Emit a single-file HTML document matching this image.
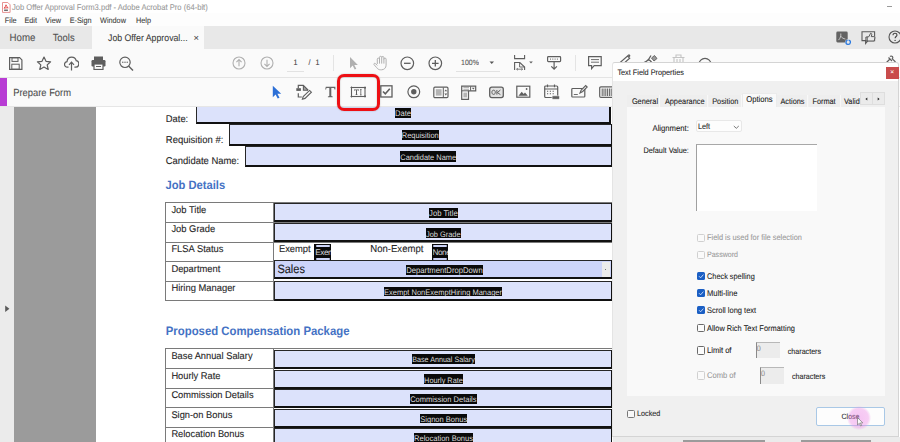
<!DOCTYPE html><html><head><meta charset="utf-8"><style>
html,body{margin:0;padding:0;width:900px;height:442px;overflow:hidden;background:#fff}
body{position:relative;font-family:"Liberation Sans",sans-serif}
.t{position:absolute;white-space:nowrap;line-height:1;-webkit-text-stroke:0.08px currentColor;text-rendering:geometricPrecision}
.b{-webkit-text-stroke:0.1px currentColor}
.n{-webkit-text-stroke:0}
.r{position:absolute;box-sizing:border-box}
</style></head><body>
<div class="r" style="left:0.00px;top:0.00px;width:900.00px;height:13.00px;background:#ffffff"></div>
<svg class="r" style="left:2px;top:2px" width="9" height="11" viewBox="0 0 9 11"><path d="M0.5 0.5h5.3l2.3 2.3v7.6h-7.6z" fill="#fff" stroke="#e38787" stroke-width="0.9"/><path d="M2 6.2c0.9-0.7 1.6-1.8 2-3.4c0.3 1.3 1 2.3 2.2 3c-1.4-0.1-2.8 0-4.2 0.4z" fill="none" stroke="#e04040" stroke-width="0.9"/><rect x="2.1" y="7.6" width="3.8" height="1.2" fill="#4a4a4a"/></svg>
<div class="t " style="left:12.00px;top:3.99px;font-size:7.6px;color:#999999;font-weight:400;transform:scaleY(1.1);transform-origin:0 1.21px;">Job Offer Approval Form3.pdf - Adobe Acrobat Pro (64-bit)</div>
<div class="r" style="left:887.00px;top:6.00px;width:5.00px;height:1.20px;background:#9a9a9a"></div>
<div class="r" style="left:0.00px;top:13.00px;width:900.00px;height:12.80px;background:#fdfdfd"></div>
<div class="t " style="left:4.80px;top:16.84px;font-size:7.3px;color:#3a3a3a;font-weight:400;transform:scaleY(1.1);transform-origin:0 1.16px;">File</div>
<div class="t " style="left:24.40px;top:16.84px;font-size:7.3px;color:#3a3a3a;font-weight:400;transform:scaleY(1.1);transform-origin:0 1.16px;">Edit</div>
<div class="t " style="left:45.30px;top:16.84px;font-size:7.3px;color:#3a3a3a;font-weight:400;transform:scaleY(1.1);transform-origin:0 1.16px;">View</div>
<div class="t " style="left:69.70px;top:16.84px;font-size:7.3px;color:#3a3a3a;font-weight:400;transform:scaleY(1.1);transform-origin:0 1.16px;">E-Sign</div>
<div class="t " style="left:100.00px;top:16.84px;font-size:7.3px;color:#3a3a3a;font-weight:400;transform:scaleY(1.1);transform-origin:0 1.16px;">Window</div>
<div class="t " style="left:136.00px;top:16.84px;font-size:7.3px;color:#3a3a3a;font-weight:400;transform:scaleY(1.1);transform-origin:0 1.16px;">Help</div>
<div class="r" style="left:0.00px;top:25.80px;width:900.00px;height:22.80px;background:#e8e8e8"></div>
<div class="t " style="left:9.50px;top:32.66px;font-size:9.7px;color:#505050;font-weight:400;transform:scaleY(1.1);transform-origin:0 1.54px;">Home</div>
<div class="t " style="left:52.70px;top:31.81px;font-size:9.4px;color:#505050;font-weight:400;transform:scaleY(1.1);transform-origin:0 1.49px;">Tools</div>
<div class="r" style="left:92.00px;top:25.80px;width:112.00px;height:22.80px;background:#fafafa"></div>
<div class="t " style="left:108.00px;top:33.01px;font-size:8.75px;color:#3c3c3c;font-weight:400;transform:scaleY(1.1);transform-origin:0 1.39px;">Job Offer Approval...</div>
<div class="t " style="left:193.60px;top:32.91px;font-size:9.4px;color:#444;font-weight:400;">&#215;</div>
<svg class="r" style="left:836px;top:31px" width="17" height="15" viewBox="0 0 17 15"><rect x="0.3" y="0.6" width="11.4" height="10.8" rx="1.3" fill="#636363"/><path d="M4.8 2.5c0.3 2.2-0.4 4.8-2.3 6.6M4.8 5.2c1 1.6 2.8 2.6 4.6 2.8" fill="none" stroke="#e0e0e0" stroke-width="0.8"/><circle cx="12.2" cy="11.2" r="3" fill="#e8e8e8"/><circle cx="12.2" cy="11.2" r="2.2" fill="none" stroke="#2d7be0" stroke-width="1.3" stroke-dasharray="11.5 2.4" transform="rotate(-80 12.2 11.2)"/></svg>
<svg class="r" style="left:861px;top:31px" width="16" height="14" viewBox="0 0 16 14"><path d="M1 0.8h12.6v8.8h-6.6l-2.4 2.8v-2.8h-3.6z" fill="none" stroke="#5a5a5a" stroke-width="1.1"/><path d="M6.2 10v-4.2h1.6l1.8-3.6c1 0 1.3 0.7 1.1 1.7l-0.4 1.7h2.6c0.7 0 1.1 0.5 1 1.2l-0.7 3.2z" fill="#e8e8e8" stroke="#5a5a5a" stroke-width="1"/><path d="M6.2 6h-1.3v4h1.3" fill="none" stroke="#5a5a5a" stroke-width="1"/></svg>
<svg class="r" style="left:888px;top:30px" width="14" height="14" viewBox="0 0 14 14"><circle cx="7" cy="7" r="6" fill="none" stroke="#555" stroke-width="1.1"/><path d="M5 5.2c0-1.2 0.9-2 2-2s2 0.8 2 1.8c0 1.4-1.9 1.6-1.9 3.2" fill="none" stroke="#444" stroke-width="1.1"/><circle cx="7.1" cy="10.4" r="0.7" fill="#444"/></svg>
<div class="r" style="left:0.00px;top:48.60px;width:900.00px;height:28.40px;background:#fafafa"></div>
<div class="r" style="left:0.00px;top:76.60px;width:900.00px;height:1.00px;background:#e4e4e4"></div>
<svg class="r" style="left:9px;top:57px" width="14" height="13" viewBox="0 0 14 13"><path d="M0.6 0.6h10l2.3 2.3v9.5h-12.3z" fill="none" stroke="#5e5e5e" stroke-width="1.2"/><rect x="3" y="0.8" width="6" height="3.6" fill="none" stroke="#5e5e5e" stroke-width="1"/><rect x="2.8" y="7.2" width="7.4" height="5" fill="none" stroke="#5e5e5e" stroke-width="1"/></svg>
<svg class="r" style="left:36px;top:56px" width="16" height="14" viewBox="0 0 16 14"><path d="M8 1l2 4.3 4.6 0.5-3.4 3.1 1 4.6-4.2-2.4-4.2 2.4 1-4.6-3.4-3.1 4.6-0.5z" fill="none" stroke="#5e5e5e" stroke-width="1.2" stroke-linejoin="round"/></svg>
<svg class="r" style="left:64px;top:56px" width="15" height="15" viewBox="0 0 15 15"><path d="M4.5 11.2h-1.2c-1.6 0-2.8-1.2-2.8-2.8c0-1.5 1.1-2.6 2.5-2.8c0.3-2.6 2.3-4.4 4.7-4.4c2.2 0 4 1.5 4.5 3.5c1.6 0.1 2.6 1.4 2.6 2.9c0 1.9-1.3 3.6-3.2 3.6h-1.2" fill="none" stroke="#5e5e5e" stroke-width="1.2"/><path d="M7.5 14.5v-8.2M5 8.8l2.5-2.6 2.5 2.6" fill="none" stroke="#5e5e5e" stroke-width="1.2"/></svg>
<svg class="r" style="left:91px;top:56px" width="15" height="14" viewBox="0 0 15 14"><rect x="3" y="0.5" width="9" height="3.5" fill="#5e5e5e"/><rect x="0.5" y="4" width="14" height="6.5" rx="1.2" fill="#5e5e5e"/><rect x="3" y="8" width="9" height="5.5" fill="#fafafa" stroke="#5e5e5e" stroke-width="1.2"/><rect x="5" y="10" width="5" height="1" fill="#5e5e5e"/></svg>
<svg class="r" style="left:119px;top:56px" width="15" height="15" viewBox="0 0 15 15"><circle cx="6" cy="6.3" r="5.2" fill="none" stroke="#5e5e5e" stroke-width="1.2"/><path d="M9.8 10.2l4.2 4.2" stroke="#5e5e5e" stroke-width="1.4"/><circle cx="3.8" cy="6.3" r="0.7" fill="#5e5e5e"/><circle cx="6" cy="6.3" r="0.7" fill="#5e5e5e"/><circle cx="8.2" cy="6.3" r="0.7" fill="#5e5e5e"/></svg>
<svg class="r" style="left:232px;top:56px" width="14" height="14" viewBox="0 0 14 14"><circle cx="7" cy="7" r="6" fill="none" stroke="#b0b0b0" stroke-width="1.1"/><path d="M7 10.3v-6.6M4.4 6.2l2.6-2.6 2.6 2.6" fill="none" stroke="#b0b0b0" stroke-width="1.1"/></svg>
<svg class="r" style="left:260px;top:56px" width="14" height="14" viewBox="0 0 14 14"><circle cx="7" cy="7" r="6" fill="none" stroke="#b0b0b0" stroke-width="1.1"/><path d="M7 3.7v6.6M4.4 7.8l2.6 2.6 2.6-2.6" fill="none" stroke="#b0b0b0" stroke-width="1.1"/></svg>
<div class="t " style="left:293.60px;top:58.96px;font-size:7.2px;color:#444;font-weight:400;transform:scaleY(1.1);transform-origin:0 1.14px;">1</div>
<div class="r" style="left:286.70px;top:70.80px;width:17.70px;height:0.80px;background:#e2e2e2"></div>
<div class="t " style="left:308.40px;top:58.96px;font-size:7.2px;color:#444;font-weight:400;transform:scaleY(1.1);transform-origin:0 1.14px;">/</div>
<div class="t " style="left:315.60px;top:58.96px;font-size:7.2px;color:#444;font-weight:400;transform:scaleY(1.1);transform-origin:0 1.14px;">1</div>
<div class="r" style="left:332.50px;top:55.00px;width:1.00px;height:16.00px;background:#e4e4e4"></div>
<svg class="r" style="left:349px;top:56px" width="10" height="14" viewBox="0 0 10 14"><path d="M1 1v11.2l2.7-2.6 2 3.9 1.6-0.8-2-3.8h3.6z" fill="#b0b0b0"/></svg>
<svg class="r" style="left:373px;top:55px" width="16" height="16" viewBox="0 0 16 16"><path d="M4.3 9V4.2a1.1 1.1 0 0 1 2.2 0V2.4a1.1 1.1 0 0 1 2.2 0V2.6a1.1 1.1 0 0 1 2.2 0V4.2a1.1 1.1 0 0 1 2.2 0V10.2c0 2.7-2 4.6-4.6 4.6h-0.9c-1.8 0-3-0.8-4-2.3L1 9.6c-0.5-0.9 0.7-1.8 1.5-1L4.3 10.4M6.5 4v4.6M8.7 2.6v6M10.9 4v4.6" fill="none" stroke="#b0b0b0" stroke-width="1"/></svg>
<svg class="r" style="left:400px;top:56px" width="15" height="15" viewBox="0 0 15 15"><circle cx="7.3" cy="7.3" r="6.3" fill="none" stroke="#5e5e5e" stroke-width="1.2"/><path d="M4 7.3h6.6" stroke="#5e5e5e" stroke-width="1.3"/></svg>
<svg class="r" style="left:428px;top:56px" width="15" height="15" viewBox="0 0 15 15"><circle cx="7.3" cy="7.3" r="6.3" fill="none" stroke="#5e5e5e" stroke-width="1.2"/><path d="M4 7.3h6.6M7.3 4v6.6" stroke="#5e5e5e" stroke-width="1.3"/></svg>
<div class="t " style="left:461.00px;top:59.89px;font-size:7.0px;color:#555;font-weight:400;transform:scaleY(1.1);transform-origin:0 1.11px;">100%</div>
<svg class="r" style="left:489px;top:61px" width="6" height="4" viewBox="0 0 6 4"><path d="M0.5 0.5h4.5l-2.25 2.6z" fill="#555"/></svg>
<div class="r" style="left:455.60px;top:70.80px;width:44.00px;height:0.80px;background:#e2e2e2"></div>
<svg class="r" style="left:513px;top:54px" width="22" height="17" viewBox="0 0 22 17"><path d="M1.6 1v3.6h10v-3.6" fill="none" stroke="#5e5e5e" stroke-width="1.1"/><path d="M1.6 16v-7.5h5.2l4.8 4.6v2.9" fill="none" stroke="#5e5e5e" stroke-width="1.1"/><path d="M6.6 8.6v4.4h4.8" fill="none" stroke="#5e5e5e" stroke-width="0.9"/><path d="M3.6 15.2h6M3.6 15.2l1.2-1M3.6 15.2l1.2 1M9.6 15.2l-1.2-1M9.6 15.2l-1.2 1" fill="none" stroke="#5e5e5e" stroke-width="0.8"/><path d="M16.2 7.4h3.6l-1.8 2.1z" fill="#5e5e5e"/></svg>
<svg class="r" style="left:547px;top:56px" width="15" height="15" viewBox="0 0 15 15"><rect x="0.6" y="0.6" width="13" height="5" rx="0.8" fill="none" stroke="#5e5e5e" stroke-width="1.2"/><path d="M3 3.1h1M5.3 3.1h1M7.6 3.1h1M9.9 3.1h1" stroke="#5e5e5e" stroke-width="1"/><path d="M7.1 6v7M4.3 10.3l2.8 2.8 2.8-2.8" fill="none" stroke="#5e5e5e" stroke-width="1.2"/></svg>
<div class="r" style="left:574.60px;top:55.00px;width:1.00px;height:16.00px;background:#e4e4e4"></div>
<svg class="r" style="left:588px;top:56px" width="15" height="14" viewBox="0 0 15 14"><path d="M0.6 0.6h12.6v9h-7l-2.6 3v-3h-3z" fill="none" stroke="#5e5e5e" stroke-width="1.2"/><path d="M3 3.6h8M3 6.2h8" stroke="#5e5e5e" stroke-width="0.9"/></svg>
<svg class="r" style="left:616px;top:53px" width="16" height="10" viewBox="0 0 16 10"><path d="M3 10.5l8.5-7.5 2.2 2.2-8.5 7.5M11.5 3l1-0.9c0.6-0.5 1.6 0.5 1 1.1l-0.8 1" fill="none" stroke="#5e5e5e" stroke-width="1.2"/></svg>
<svg class="r" style="left:643px;top:54px" width="16" height="9" viewBox="0 0 16 9"><path d="M1 8.5c1.6-0.6 3-1.4 4.5-3M5.5 5.5l2.5-4M5.5 5.5c1 0.6 2 1.2 3 2.6" fill="none" stroke="#5e5e5e" stroke-width="1.3"/><path d="M8.5 4l3-2.5 2.5 3-3 2.5z" fill="#9a9a9a" stroke="#5e5e5e" stroke-width="0.9"/></svg>
<svg class="r" style="left:671px;top:54px" width="15" height="9" viewBox="0 0 15 9"><path d="M1.5 3.5h12M5 3v-2h5v2M3 4v6M12 4v6M6 5v5M9 5v5" fill="none" stroke="#c4c4c4" stroke-width="1.1"/></svg>
<svg class="r" style="left:698px;top:57px" width="15" height="7" viewBox="0 0 15 7"><circle cx="7" cy="7.3" r="6" fill="none" stroke="#5e5e5e" stroke-width="1.2"/></svg>
<svg class="r" style="left:884px;top:55px" width="14" height="8" viewBox="0 0 14 8"><path d="M2 8l4-4M4.5 2.5l3.5 3.5M6 1.5c1.5-1.5 3.8 0.8 2.3 2.3l3.2 3.2" fill="none" stroke="#5e5e5e" stroke-width="1.2"/></svg>
<div class="r" style="left:0.00px;top:77.60px;width:900.00px;height:28.90px;background:#fafafa"></div>
<div class="r" style="left:0.00px;top:77.60px;width:6.50px;height:28.80px;background:#b83cd4"></div>
<div class="r" style="left:0.00px;top:105.60px;width:900.00px;height:1.00px;background:#e6e6e6"></div>
<div class="t " style="left:13.20px;top:87.41px;font-size:9.4px;color:#4b4b4b;font-weight:400;transform:scaleY(1.1);transform-origin:0 1.49px;">Prepare Form</div>
<svg class="r" style="left:272px;top:85px" width="10" height="14" viewBox="0 0 10 14"><path d="M0.8 0.8v11.5l2.8-2.7 2.1 4 1.8-0.9-2.1-3.9h3.8z" fill="#2c6fd6"/></svg>
<svg class="r" style="left:292px;top:82px" width="22" height="20" viewBox="0 0 22 20"><path d="M6.3 6.3V3.4H11.3L16.2 8.2" fill="none" stroke="#5e5e5e" stroke-width="1.2"/><path d="M11.5 3.8V8.2H15.8z" fill="#5e5e5e" opacity="0.55"/><path d="M11.4 3.6V8.2H16" fill="none" stroke="#5e5e5e" stroke-width="1.1"/><path d="M6.3 11.3V15H9.8" fill="none" stroke="#5e5e5e" stroke-width="1.2"/><rect x="4.3" y="6.2" width="4.6" height="2.7" fill="#5e5e5e"/><path d="M10.4 17.2l0.8-2.6 6.4-6.2 1.8 1.8-6.4 6.2z" fill="none" stroke="#5e5e5e" stroke-width="1.1"/></svg>
<svg class="r" style="left:325px;top:86px" width="12" height="12" viewBox="0 0 12 12"><path d="M0.8 0.8h9.6v2.6h-0.9l-0.4-1.5h-2.8v8.2l1.4 0.4v0.8h-4.8v-0.8l1.4-0.4v-8.2h-2.8l-0.4 1.5h-0.9z" fill="#666"/></svg>
<svg class="r" style="left:350px;top:86px" width="17" height="12" viewBox="0 0 17 12"><rect x="1.5" y="1.5" width="13.5" height="9" fill="none" stroke="#5e5e5e" stroke-width="1.1"/><path d="M0.5 1.5h2.5M0.5 10.5h2.5M13.5 1.5h2.5M13.5 10.5h2.5M1.5 0.5v2.5M1.5 9v2.5M15 0.5v2.5M15 9v2.5" stroke="#5e5e5e" stroke-width="0.9"/><path d="M4 3.6h5v1.2h-0.4l-0.3-0.5h-1.3v4.1l0.6 0.2v0.4h-2.2v-0.4l0.6-0.2v-4.1h-1.3l-0.3 0.5h-0.4z" fill="#5e5e5e"/><path d="M10.8 3.6v5.3M10 3.6h1.6M10 8.9h1.6" stroke="#5e5e5e" stroke-width="0.8"/></svg>
<svg class="r" style="left:380px;top:85px" width="13" height="13" viewBox="0 0 13 13"><rect x="0.8" y="0.8" width="11.2" height="11.2" fill="none" stroke="#5e5e5e" stroke-width="1.3"/><path d="M3 6.5l2.3 2.3 4.5-5" fill="none" stroke="#5e5e5e" stroke-width="1.6"/></svg>
<svg class="r" style="left:407px;top:85px" width="14" height="14" viewBox="0 0 14 14"><circle cx="6.8" cy="6.8" r="5.9" fill="none" stroke="#5e5e5e" stroke-width="1.2"/><circle cx="6.8" cy="6.8" r="2.7" fill="#5e5e5e"/></svg>
<svg class="r" style="left:433px;top:86px" width="16" height="13" viewBox="0 0 16 13"><rect x="0.8" y="1.2" width="14.2" height="10.4" rx="1.2" fill="none" stroke="#5e5e5e" stroke-width="1.2"/><rect x="2.8" y="3.2" width="5.8" height="6.4" fill="#b4b4b4"/><path d="M10.3 1.5v10" stroke="#5e5e5e" stroke-width="1"/><path d="M11.4 5.2l1.4-1.8 1.4 1.8zM11.4 7.6l1.4 1.8 1.4-1.8z" fill="#5e5e5e"/></svg>
<svg class="r" style="left:461px;top:85px" width="16" height="15" viewBox="0 0 16 15"><path d="M0.7 1.2h14v4.6h-7.2v8.5h-6.8z" fill="none" stroke="#5e5e5e" stroke-width="1.2"/><path d="M0.7 5.8h6.8M9.6 1.4v4.2" stroke="#5e5e5e" stroke-width="1"/><path d="M2.4 2.6h5.6M2.4 4.3h5.6" stroke="#9a9a9a" stroke-width="0.8"/><path d="M10.8 2.7h3l-1.5 1.8z" fill="#5e5e5e"/><rect x="2.4" y="7.6" width="3.6" height="4.8" fill="#b4b4b4"/></svg>
<svg class="r" style="left:489px;top:86px" width="15" height="13" viewBox="0 0 15 13"><rect x="0.7" y="1.2" width="13.6" height="10.4" rx="2" fill="#e2e2e2" stroke="#5e5e5e" stroke-width="1.3"/><path d="M4.6 4.2c-1.1 0-1.7 0.8-1.7 2.1s0.6 2.1 1.7 2.1 1.7-0.8 1.7-2.1-0.6-2.1-1.7-2.1z" fill="none" stroke="#5e5e5e" stroke-width="1"/><path d="M7.9 4v4.6M11.4 4l-3 2.6 3 2" fill="none" stroke="#5e5e5e" stroke-width="1"/></svg>
<svg class="r" style="left:516px;top:85px" width="15" height="14" viewBox="0 0 15 14"><rect x="0.8" y="1.2" width="13" height="11" fill="none" stroke="#5e5e5e" stroke-width="1.2"/><path d="M2.5 10.8l3.2-4 2 2.3 1.3-1.5 2.8 3.2z" fill="#5e5e5e"/><circle cx="10.6" cy="4" r="0.9" fill="#5e5e5e"/></svg>
<svg class="r" style="left:544px;top:84px" width="16" height="16" viewBox="0 0 16 16"><rect x="0.7" y="2" width="13" height="11.5" rx="1" fill="none" stroke="#5e5e5e" stroke-width="1.2"/><path d="M0.7 5h13M3.5 0.6v2.6M10.5 0.6v2.6" stroke="#5e5e5e" stroke-width="1.2"/><path d="M3 7.3h1.2M5.8 7.3h1.2M8.6 7.3h1.2M3 9.8h1.2M5.8 9.8h1.2M8.6 9.8h1.2" stroke="#5e5e5e" stroke-width="1.1"/><rect x="8" y="11.8" width="7.5" height="3.5" rx="1" fill="#5e5e5e" stroke="#fafafa" stroke-width="0.6"/></svg>
<svg class="r" style="left:571px;top:84px" width="17" height="14" viewBox="0 0 17 14"><rect x="0.8" y="4.5" width="13" height="8.5" rx="0.8" fill="none" stroke="#5e5e5e" stroke-width="1.2"/><path d="M2.8 10.5h4" stroke="#5e5e5e" stroke-width="0.9"/><path d="M9 9l1.2-3 4.5-4.5 1.5 1.5-4.5 4.5z" fill="#fafafa" stroke="#5e5e5e" stroke-width="1.1"/></svg>
<svg class="r" style="left:599px;top:86px" width="20" height="12" viewBox="0 0 20 12"><rect x="0.7" y="0.8" width="17" height="10.6" rx="1.2" fill="none" stroke="#5e5e5e" stroke-width="1.2"/><path d="M3.2 2.5v7.5M5 2.5v7.5M6.8 2.5v7.5M8.6 2.5v7.5M10.4 2.5v7.5M12.2 2.5v7.5" stroke="#5e5e5e" stroke-width="1"/></svg>
<div class="r" style="left:0.00px;top:106.60px;width:14.20px;height:335.40px;background:#ebebeb"></div>
<svg class="r" style="left:5px;top:305px" width="5" height="8" viewBox="0 0 5 8"><path d="M0.2 0.5l4.2 3.3-4.2 3.3z" fill="#5a5a5a"/></svg>
<div class="r" style="left:14.20px;top:106.60px;width:82.10px;height:335.40px;background:#9b9b9b"></div>
<div class="r" style="left:96.30px;top:106.60px;width:516.20px;height:335.40px;background:#ffffff"></div>
<div class="t b" style="left:165.80px;top:114.01px;font-size:9.4px;color:#262626;font-weight:400;transform:scaleY(1.05);transform-origin:0 1.49px;">Date:</div>
<div class="r" style="left:195.60px;top:106.60px;width:415.00px;height:17.40px;background:#dce2fb;border-left:1.6px solid #2a2a2a;border-bottom:2px solid #111;border-right:2px solid #111"></div>
<div class="r" style="left:395.00px;top:108.20px;width:16.20px;height:9.70px;background:#0a0a0a"></div>
<div class="t n" style="left:393.00px;top:110.37px;width:20.20px;text-align:center;font-size:7.57px;color:#dcdcdc;transform:scaleY(1.08)">Date</div>
<div class="t b" style="left:165.80px;top:135.69px;font-size:9.5px;color:#262626;font-weight:400;transform:scaleY(1.05);transform-origin:0 1.51px;">Requisition #:</div>
<div class="r" style="left:228.80px;top:124.00px;width:382.80px;height:22.20px;background:#dce2fb;border-top:1.9px solid #262626;border-left:1.7px solid #262626;border-bottom:2px solid #111;border-right:1.7px solid #111"></div>
<div class="r" style="left:401.80px;top:129.70px;width:37.00px;height:10.30px;background:#0a0a0a"></div>
<div class="t n" style="left:399.80px;top:132.21px;width:41.00px;text-align:center;font-size:7.48px;color:#dcdcdc;transform:scaleY(1.08)">Requisition</div>
<div class="t b" style="left:165.80px;top:157.10px;font-size:9.45px;color:#262626;font-weight:400;transform:scaleY(1.05);transform-origin:0 1.50px;">Candidate Name:</div>
<div class="r" style="left:245.00px;top:146.20px;width:366.60px;height:20.40px;background:#dce2fb;border-top:1.9px solid #262626;border-left:1.7px solid #262626;border-bottom:2px solid #111;border-right:1.7px solid #111"></div>
<div class="r" style="left:400.30px;top:151.30px;width:55.90px;height:10.30px;background:#0a0a0a"></div>
<div class="t n" style="left:398.30px;top:153.82px;width:59.90px;text-align:center;font-size:7.46px;color:#dcdcdc;transform:scaleY(1.08)">Candidate Name</div>
<div class="t " style="left:165.50px;top:181.22px;font-size:11.2px;color:#4472c4;font-weight:700;-webkit-text-stroke:0;transform:scaleY(1.07);transform-origin:0 1.78px;">Job Details</div>
<div class="r" style="left:165.00px;top:202.10px;width:447.50px;height:99.20px;border:1px solid #7a7a7a;border-right:none"></div>
<div class="r" style="left:165.50px;top:221.80px;width:447.00px;height:1.00px;background:#7a7a7a"></div>
<div class="r" style="left:165.50px;top:241.50px;width:447.00px;height:1.00px;background:#7a7a7a"></div>
<div class="r" style="left:165.50px;top:261.10px;width:447.00px;height:1.00px;background:#7a7a7a"></div>
<div class="r" style="left:165.50px;top:280.70px;width:447.00px;height:1.00px;background:#7a7a7a"></div>
<div class="r" style="left:273.30px;top:202.10px;width:1.00px;height:99.20px;background:#7a7a7a"></div>
<div class="t b" style="left:171.40px;top:204.71px;font-size:9.4px;color:#262626;font-weight:400;transform:scaleY(1.05);transform-origin:0 1.49px;">Job Title</div>
<div class="t b" style="left:171.40px;top:224.41px;font-size:9.4px;color:#262626;font-weight:400;transform:scaleY(1.05);transform-origin:0 1.49px;">Job Grade</div>
<div class="t b" style="left:171.40px;top:244.11px;font-size:9.4px;color:#262626;font-weight:400;transform:scaleY(1.05);transform-origin:0 1.49px;">FLSA Status</div>
<div class="t b" style="left:171.40px;top:263.71px;font-size:9.4px;color:#262626;font-weight:400;transform:scaleY(1.05);transform-origin:0 1.49px;">Department</div>
<div class="t b" style="left:171.40px;top:283.31px;font-size:9.4px;color:#262626;font-weight:400;transform:scaleY(1.05);transform-origin:0 1.49px;">Hiring Manager</div>
<div class="r" style="left:274.30px;top:203.40px;width:337.90px;height:18.80px;background:#dce2fb;border-top:1.9px solid #262626;border-left:1.7px solid #262626;border-bottom:2px solid #111;border-right:1.7px solid #111"></div>
<div class="r" style="left:429.10px;top:208.00px;width:28.60px;height:9.90px;background:#0a0a0a"></div>
<div class="t n" style="left:427.10px;top:210.21px;width:32.60px;text-align:center;font-size:7.68px;color:#dcdcdc;transform:scaleY(1.08)">Job Title</div>
<div class="r" style="left:274.30px;top:222.70px;width:337.90px;height:19.60px;background:#dce2fb;border-top:1.9px solid #262626;border-left:1.7px solid #262626;border-bottom:2px solid #111;border-right:1.7px solid #111"></div>
<div class="r" style="left:426.00px;top:228.30px;width:34.60px;height:9.60px;background:#0a0a0a"></div>
<div class="t n" style="left:424.00px;top:230.50px;width:38.60px;text-align:center;font-size:7.41px;color:#dcdcdc;transform:scaleY(1.08)">Job Grade</div>
<div class="t b" style="left:278.90px;top:244.11px;font-size:9.4px;color:#262626;font-weight:400;transform:scaleY(1.05);transform-origin:0 1.49px;">Exempt</div>
<div class="t b" style="left:370.30px;top:244.88px;font-size:9.55px;color:#262626;font-weight:400;transform:scaleY(1.05);transform-origin:0 1.52px;">Non-Exempt</div>
<div class="r" style="left:314.30px;top:244.00px;width:16.90px;height:16.30px;background:#0a0a0a"></div>
<div class="r" style="left:315.60px;top:245.30px;width:14.40px;height:1.90px;background:#cdd4f6;border-radius:1px"></div>
<div class="r" style="left:315.60px;top:257.80px;width:14.40px;height:1.90px;background:#cdd4f6;border-radius:1px"></div>
<div class="t n" style="left:315.30px;top:248.90px;font-size:8.2px;letter-spacing:-0.45px;color:#d8d8d8;width:15.6px;overflow:hidden">Exempt</div>
<div class="r" style="left:431.50px;top:244.00px;width:16.90px;height:16.30px;background:#0a0a0a"></div>
<div class="r" style="left:432.80px;top:245.30px;width:14.40px;height:1.90px;background:#cdd4f6;border-radius:1px"></div>
<div class="r" style="left:432.80px;top:257.80px;width:14.40px;height:1.90px;background:#cdd4f6;border-radius:1px"></div>
<div class="t n" style="left:432.50px;top:248.90px;font-size:8.2px;letter-spacing:-0.45px;color:#d8d8d8;width:15.6px;overflow:hidden">None</div>
<div class="r" style="left:274.30px;top:259.80px;width:337.90px;height:19.00px;background:#cdd5fa;border-top:1.9px solid #262626;border-left:1.7px solid #262626;border-bottom:2px solid #111;border-right:1.7px solid #111"></div>
<div class="r" style="left:601.50px;top:262.20px;width:8.30px;height:14.40px;background:#ececec"></div>
<div class="r" style="left:604.50px;top:269.20px;width:1.50px;height:0.80px;background:#777"></div>
<div class="t " style="left:277.40px;top:263.85px;font-size:11.0px;color:#1a1a1a;font-weight:400;transform:scaleY(1.1);transform-origin:0 1.75px;">Sales</div>
<div class="r" style="left:406.20px;top:264.70px;width:76.50px;height:10.10px;background:#0a0a0a"></div>
<div class="t n" style="left:404.20px;top:267.00px;width:80.50px;text-align:center;font-size:7.69px;color:#dcdcdc;transform:scaleY(1.08)">DepartmentDropDown</div>
<div class="r" style="left:274.30px;top:280.90px;width:337.90px;height:19.90px;background:#dce2fb;border-top:1.9px solid #262626;border-left:1.7px solid #262626;border-bottom:2px solid #111;border-right:1.7px solid #111"></div>
<div class="r" style="left:384.00px;top:286.50px;width:118.00px;height:9.90px;background:#0a0a0a"></div>
<div class="t n" style="left:382.00px;top:288.80px;width:122.00px;text-align:center;font-size:7.5px;color:#dcdcdc;transform:scaleY(1.08)">Exempt NonExemptHiring Manager</div>
<div class="t " style="left:165.80px;top:326.80px;font-size:11.36px;color:#4472c4;font-weight:700;-webkit-text-stroke:0;transform:scaleY(1.08);transform-origin:0 1.80px;">Proposed Compensation Package</div>
<div class="r" style="left:165.00px;top:348.10px;width:447.50px;height:111.90px;border:1px solid #7a7a7a;border-right:none"></div>
<div class="r" style="left:165.50px;top:368.00px;width:447.00px;height:1.00px;background:#7a7a7a"></div>
<div class="r" style="left:165.50px;top:387.70px;width:447.00px;height:1.00px;background:#7a7a7a"></div>
<div class="r" style="left:165.50px;top:407.20px;width:447.00px;height:1.00px;background:#7a7a7a"></div>
<div class="r" style="left:165.50px;top:426.80px;width:447.00px;height:1.00px;background:#7a7a7a"></div>
<div class="r" style="left:273.30px;top:348.10px;width:1.00px;height:111.90px;background:#7a7a7a"></div>
<div class="t b" style="left:171.40px;top:351.62px;font-size:9.3px;color:#262626;font-weight:400;transform:scaleY(1.05);transform-origin:0 1.48px;">Base Annual Salary</div>
<div class="t b" style="left:171.40px;top:371.52px;font-size:9.3px;color:#262626;font-weight:400;transform:scaleY(1.05);transform-origin:0 1.48px;">Hourly Rate</div>
<div class="t b" style="left:171.40px;top:391.22px;font-size:9.3px;color:#262626;font-weight:400;transform:scaleY(1.05);transform-origin:0 1.48px;">Commission Details</div>
<div class="t b" style="left:171.40px;top:410.72px;font-size:9.3px;color:#262626;font-weight:400;transform:scaleY(1.05);transform-origin:0 1.48px;">Sign-on Bonus</div>
<div class="t b" style="left:171.40px;top:430.32px;font-size:9.3px;color:#262626;font-weight:400;transform:scaleY(1.05);transform-origin:0 1.48px;">Relocation Bonus</div>
<div class="r" style="left:274.30px;top:349.60px;width:337.90px;height:19.20px;background:#dce2fb;border-top:1.9px solid #262626;border-left:1.7px solid #262626;border-bottom:2px solid #111;border-right:1.7px solid #111"></div>
<div class="r" style="left:412.20px;top:354.40px;width:62.60px;height:9.90px;background:#0a0a0a"></div>
<div class="t n" style="left:410.20px;top:356.87px;width:66.60px;text-align:center;font-size:7.17px;color:#dcdcdc;transform:scaleY(1.08)">Base Annual Salary</div>
<div class="r" style="left:274.30px;top:369.50px;width:337.90px;height:19.20px;background:#dce2fb;border-top:1.9px solid #262626;border-left:1.7px solid #262626;border-bottom:2px solid #111;border-right:1.7px solid #111"></div>
<div class="r" style="left:424.10px;top:374.30px;width:38.80px;height:9.90px;background:#0a0a0a"></div>
<div class="t n" style="left:422.10px;top:376.68px;width:42.80px;text-align:center;font-size:7.35px;color:#dcdcdc;transform:scaleY(1.08)">Hourly Rate</div>
<div class="r" style="left:274.30px;top:389.20px;width:337.90px;height:19.20px;background:#dce2fb;border-top:1.9px solid #262626;border-left:1.7px solid #262626;border-bottom:2px solid #111;border-right:1.7px solid #111"></div>
<div class="r" style="left:410.10px;top:394.00px;width:66.50px;height:9.90px;background:#0a0a0a"></div>
<div class="t n" style="left:408.10px;top:396.29px;width:70.50px;text-align:center;font-size:7.53px;color:#dcdcdc;transform:scaleY(1.08)">Commission Details</div>
<div class="r" style="left:274.30px;top:408.70px;width:337.90px;height:19.20px;background:#dce2fb;border-top:1.9px solid #262626;border-left:1.7px solid #262626;border-bottom:2px solid #111;border-right:1.7px solid #111"></div>
<div class="r" style="left:420.30px;top:413.50px;width:46.90px;height:9.90px;background:#0a0a0a"></div>
<div class="t n" style="left:418.30px;top:415.78px;width:50.90px;text-align:center;font-size:7.55px;color:#dcdcdc;transform:scaleY(1.08)">Signon Bonus</div>
<div class="r" style="left:274.30px;top:428.30px;width:337.90px;height:19.20px;background:#dce2fb;border-top:1.9px solid #262626;border-left:1.7px solid #262626;border-bottom:2px solid #111;border-right:1.7px solid #111"></div>
<div class="r" style="left:414.00px;top:433.10px;width:59.00px;height:9.90px;background:#0a0a0a"></div>
<div class="t n" style="left:412.00px;top:435.39px;width:63.00px;text-align:center;font-size:7.53px;color:#dcdcdc;transform:scaleY(1.08)">Relocation Bonus</div>
<div class="r" style="left:336.80px;top:73.60px;width:43.20px;height:37.20px;border:3.5px solid #ee0f14;border-radius:7px;box-shadow:inset 0 0 1.5px rgba(0,0,0,0.35),0 0 1.5px rgba(0,0,0,0.3)"></div>
<div class="r" style="left:611.80px;top:62.20px;width:287.70px;height:374.80px;background:#f0f0f0;border:1px solid #d4d4d4;border-left-color:#e4e4e4;border-radius:3px 3px 0 0"></div>
<div class="r" style="left:612.80px;top:63.20px;width:285.70px;height:17.40px;background:#ffffff;border-radius:2px 2px 0 0"></div>
<div class="t " style="left:617.40px;top:68.84px;font-size:7.3px;color:#222;font-weight:400;transform:scaleY(1.1);transform-origin:0 1.16px;">Text Field Properties</div>
<div class="r" style="left:886.00px;top:66.80px;width:12.80px;height:12.20px;background:#c94c4c"></div>
<div class="t " style="left:890.20px;top:69.57px;font-size:6.5px;color:#fff;font-weight:400;">&#215;</div>
<div class="r" style="left:627.00px;top:95.20px;width:33.40px;height:12.30px;background:#eeeeee;border-right:1px solid #f8f8f8"></div>
<div class="t " style="left:631.90px;top:97.63px;font-size:7.35px;color:#222;font-weight:400;transform:scaleY(1.1);transform-origin:0 1.17px;">General</div>
<div class="r" style="left:660.40px;top:95.20px;width:48.10px;height:12.30px;background:#eeeeee;border-right:1px solid #f8f8f8"></div>
<div class="t " style="left:664.90px;top:97.63px;font-size:7.35px;color:#222;font-weight:400;transform:scaleY(1.1);transform-origin:0 1.17px;">Appearance</div>
<div class="r" style="left:708.50px;top:95.20px;width:33.30px;height:12.30px;background:#eeeeee;border-right:1px solid #f8f8f8"></div>
<div class="t " style="left:712.20px;top:97.63px;font-size:7.35px;color:#222;font-weight:400;transform:scaleY(1.1);transform-origin:0 1.17px;">Position</div>
<div class="r" style="left:776.90px;top:95.20px;width:31.60px;height:12.30px;background:#eeeeee;border-right:1px solid #f8f8f8"></div>
<div class="t " style="left:780.40px;top:97.63px;font-size:7.35px;color:#222;font-weight:400;transform:scaleY(1.1);transform-origin:0 1.17px;">Actions</div>
<div class="r" style="left:808.50px;top:95.20px;width:32.00px;height:12.30px;background:#eeeeee;border-right:1px solid #f8f8f8"></div>
<div class="t " style="left:812.40px;top:97.63px;font-size:7.35px;color:#222;font-weight:400;transform:scaleY(1.1);transform-origin:0 1.17px;">Format</div>
<div class="r" style="left:840.50px;top:95.20px;width:19.90px;height:12.30px;background:#eeeeee;border-right:1px solid #f8f8f8"></div>
<div class="t " style="left:844.00px;top:97.63px;font-size:7.35px;color:#222;font-weight:400;transform:scaleY(1.1);transform-origin:0 1.17px;">Valid</div>
<div class="r" style="left:741.80px;top:92.80px;width:35.10px;height:15.20px;background:#f9f9f9;border:1px solid #ebebeb;border-bottom:none"></div>
<div class="t " style="left:746.20px;top:95.98px;font-size:7.7px;color:#222;font-weight:400;transform:scaleY(1.1);transform-origin:0 1.22px;">Options</div>
<div class="r" style="left:860.00px;top:92.10px;width:12.80px;height:13.30px;background:#ebebeb;border:1px solid #dedede"></div>
<div class="r" style="left:872.20px;top:92.10px;width:12.60px;height:13.30px;background:#ebebeb;border:1px solid #dedede"></div>
<svg class="r" style="left:864px;top:96px" width="5" height="6" viewBox="0 0 5 6"><path d="M3.3 1.4l-1.9 1.6 1.9 1.6z" fill="#222"/></svg>
<svg class="r" style="left:876px;top:96px" width="5" height="6" viewBox="0 0 5 6"><path d="M1.7 1.4l1.9 1.6-1.9 1.6z" fill="#222"/></svg>
<div class="r" style="left:626.70px;top:107.40px;width:258.60px;height:288.60px;background:#f9f9f9"></div>
<div class="t " style="left:652.50px;top:125.28px;font-size:7.7px;color:#222;font-weight:400;transform:scaleY(1.1);transform-origin:0 1.22px;">Alignment:</div>
<div class="r" style="left:696.30px;top:119.60px;width:45.30px;height:12.60px;background:#fdfdfd;border:1px solid #e8e8e8;border-radius:2px"></div>
<div class="t " style="left:697.90px;top:123.05px;font-size:7.25px;color:#1a1a1a;font-weight:400;transform:scaleY(1.1);transform-origin:0 1.15px;">Left</div>
<svg class="r" style="left:733px;top:124.5px" width="7" height="5" viewBox="0 0 7 5"><path d="M0.8 1l2.5 2.3 2.5-2.3" fill="none" stroke="#555" stroke-width="0.8"/></svg>
<div class="t " style="left:643.40px;top:146.64px;font-size:7.33px;color:#222;font-weight:400;transform:scaleY(1.1);transform-origin:0 1.16px;">Default Value:</div>
<div class="r" style="left:696.30px;top:143.80px;width:120.50px;height:67.00px;background:#fff;border-top:1px solid #a8a8a8;border-left:1px solid #a0a0a0"></div>
<div class="r" style="left:697.00px;top:233.70px;width:8.00px;height:8.20px;background:#fafafa;border:1px solid #d0d0d0;border-radius:1.5px"></div>
<div class="t " style="left:707.00px;top:234.43px;font-size:7.4px;color:#9a9a9a;font-weight:400;transform:scaleY(1.1);transform-origin:0 1.17px;">Field is used for file selection</div>
<div class="r" style="left:697.00px;top:251.20px;width:8.00px;height:8.20px;background:#fafafa;border:1px solid #d0d0d0;border-radius:1.5px"></div>
<div class="t " style="left:707.00px;top:251.98px;font-size:7.06px;color:#9a9a9a;font-weight:400;transform:scaleY(1.1);transform-origin:0 1.12px;">Password</div>
<div class="r" style="left:697.00px;top:271.70px;width:8.00px;height:8.30px;background:#1b5fc4;border-radius:1.5px"></div>
<svg class="r" style="left:697px;top:271.7px" width="8" height="8" viewBox="0 0 8 8"><path d="M2 4.2l1.6 1.6 2.8-3.2" fill="none" stroke="#e8f0ff" stroke-width="0.8"/></svg>
<div class="t " style="left:707.00px;top:272.63px;font-size:7.35px;color:#1e1e1e;font-weight:400;transform:scaleY(1.1);transform-origin:0 1.17px;">Check spelling</div>
<div class="r" style="left:697.00px;top:288.70px;width:8.00px;height:8.30px;background:#1b5fc4;border-radius:1.5px"></div>
<svg class="r" style="left:697px;top:288.7px" width="8" height="8" viewBox="0 0 8 8"><path d="M2 4.2l1.6 1.6 2.8-3.2" fill="none" stroke="#e8f0ff" stroke-width="0.8"/></svg>
<div class="t " style="left:707.00px;top:289.59px;font-size:7.6px;color:#1e1e1e;font-weight:400;transform:scaleY(1.1);transform-origin:0 1.21px;">Multi-line</div>
<div class="r" style="left:697.00px;top:306.00px;width:8.00px;height:8.30px;background:#1b5fc4;border-radius:1.5px"></div>
<svg class="r" style="left:697px;top:306.0px" width="8" height="8" viewBox="0 0 8 8"><path d="M2 4.2l1.6 1.6 2.8-3.2" fill="none" stroke="#e8f0ff" stroke-width="0.8"/></svg>
<div class="t " style="left:707.00px;top:306.91px;font-size:7.5px;color:#1e1e1e;font-weight:400;transform:scaleY(1.1);transform-origin:0 1.19px;">Scroll long text</div>
<div class="r" style="left:697.00px;top:323.80px;width:8.00px;height:8.20px;background:#fcfcfc;border:0.9px solid #6a6a6a;border-radius:1.5px"></div>
<div class="t " style="left:707.00px;top:324.52px;font-size:7.45px;color:#1e1e1e;font-weight:400;transform:scaleY(1.1);transform-origin:0 1.18px;">Allow Rich Text Formatting</div>
<div class="r" style="left:697.00px;top:346.40px;width:8.00px;height:8.20px;background:#fcfcfc;border:0.9px solid #6a6a6a;border-radius:1.5px"></div>
<div class="t " style="left:707.00px;top:347.09px;font-size:7.6px;color:#1e1e1e;font-weight:400;transform:scaleY(1.1);transform-origin:0 1.21px;">Limit of</div>
<div class="r" style="left:755.50px;top:341.90px;width:24.30px;height:16.50px;background:#ececec;border-top:1px solid #b8b8b8;border-left:1px solid #8a8a8a"></div>
<div class="t " style="left:756.80px;top:345.26px;font-size:7.2px;color:#909090;font-weight:400;transform:scaleY(1.1);transform-origin:0 1.14px;">0</div>
<div class="t " style="left:787.80px;top:349.47px;font-size:7.13px;color:#1e1e1e;font-weight:400;transform:scaleY(1.1);transform-origin:0 1.13px;">characters</div>
<div class="r" style="left:697.00px;top:371.40px;width:8.00px;height:8.20px;background:#fafafa;border:1px solid #d0d0d0;border-radius:1.5px"></div>
<div class="t " style="left:707.00px;top:372.09px;font-size:7.6px;color:#9a9a9a;font-weight:400;transform:scaleY(1.1);transform-origin:0 1.21px;">Comb of</div>
<div class="r" style="left:759.80px;top:367.00px;width:24.10px;height:16.50px;background:#ececec;border-top:1px solid #b8b8b8;border-left:1px solid #8a8a8a"></div>
<div class="t " style="left:761.00px;top:370.26px;font-size:7.2px;color:#909090;font-weight:400;transform:scaleY(1.1);transform-origin:0 1.14px;">0</div>
<div class="t " style="left:792.00px;top:374.47px;font-size:7.13px;color:#1e1e1e;font-weight:400;transform:scaleY(1.1);transform-origin:0 1.13px;">characters</div>
<div class="r" style="left:626.70px;top:409.70px;width:8.00px;height:8.00px;background:#f8f8f8;border:1px solid #777;border-radius:1.5px"></div>
<div class="t " style="left:637.00px;top:410.15px;font-size:7.26px;color:#2a2a2a;font-weight:400;transform:scaleY(1.1);transform-origin:0 1.15px;">Locked</div>
<div class="r" style="left:815.70px;top:407.30px;width:69.60px;height:18.40px;background:#fdfdfd;border:1px solid #a9c8e6;border-radius:2px"></div>
<div class="t " style="left:841.60px;top:415.10px;font-size:6.95px;color:#1e1e1e;font-weight:400;transform:scaleY(1.1);transform-origin:0 1.10px;">Close</div>
<div class="r" style="left:846.5px;top:405.5px;width:24.4px;height:24.4px;border-radius:50%;background:radial-gradient(circle,rgba(238,140,232,0.5) 0%,rgba(238,140,232,0.42) 55%,rgba(238,140,232,0) 72%)"></div>
<svg class="r" style="left:857px;top:417px" width="7" height="10" viewBox="0 0 7 10"><path d="M0.5 0.5v7.5l1.8-1.7 1.3 2.7 1.1-0.5-1.3-2.6h2.4z" fill="#fafafa" stroke="#666" stroke-width="0.6"/></svg>
<div class="r" style="left:612.50px;top:437.00px;width:287.50px;height:5.00px;background:#ebebeb"></div>
<div class="r" style="left:682.70px;top:440.00px;width:82.30px;height:2.00px;background:#9b9b9b"></div>
<div class="r" style="left:800.70px;top:440.00px;width:70.00px;height:2.00px;background:#9b9b9b"></div>
</body></html>
